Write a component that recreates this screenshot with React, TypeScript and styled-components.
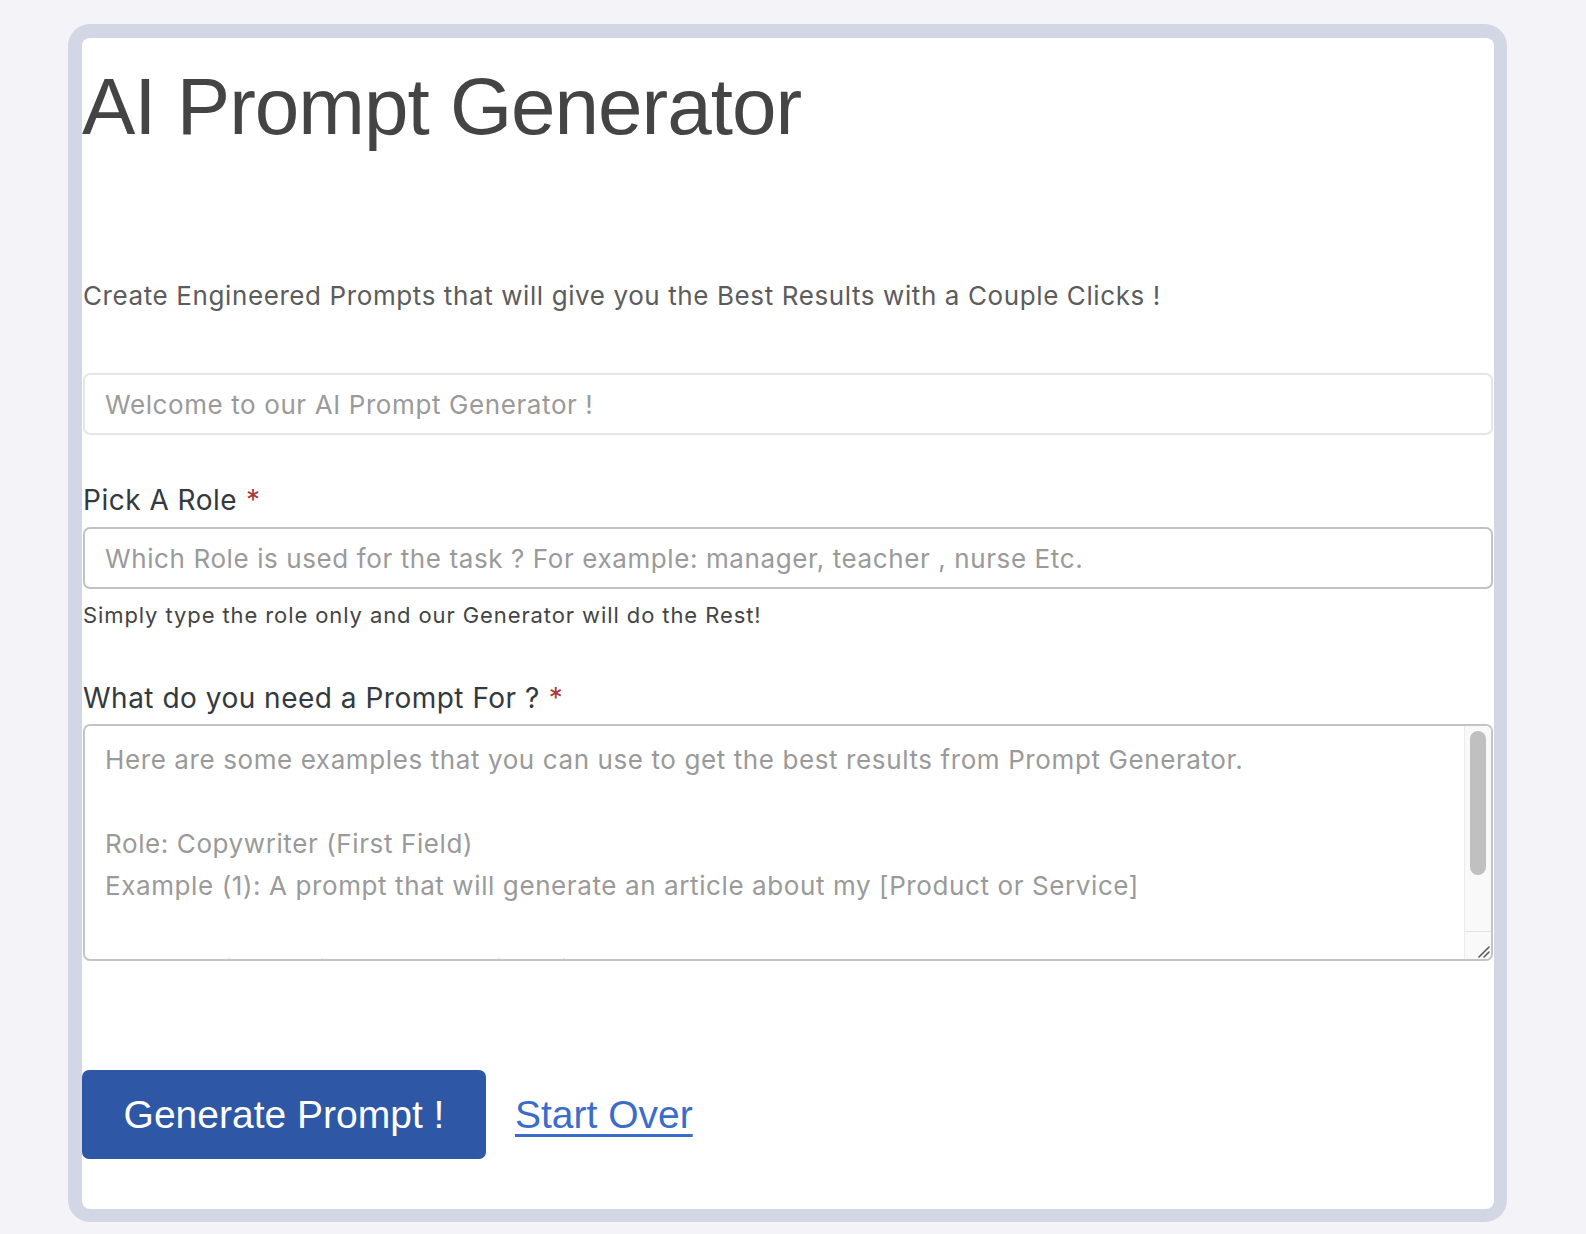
import React from "react"
import styled, { createGlobalStyle } from "styled-components"

const GlobalStyle = createGlobalStyle`
  html, body {
    margin: 0;
    padding: 0;
    background: #f3f3f8;
  }
  * {
    box-sizing: border-box;
  }
`

const Page = styled.div`
  padding: 24px 0 0 68px;
  min-height: 1234px;
  background: #f3f3f8;
`

const Frame = styled.div`
  width: 1439px;
  padding: 14px 13px 13px 14px;
  background: #d3d6e4;
  border-radius: 22px;
`

const Card = styled.div`
  background: #ffffff;
  border-radius: 8px;
  height: 1171px;
  display: flex;
  flex-direction: column;
  padding-top: 29px;
  font-family: "Inter", "Noto Sans", sans-serif;
`

const Title = styled.h1`
  margin: 0;
  font-family: "Liberation Sans", Arial, sans-serif;
  font-weight: 400;
  font-size: 80px;
  line-height: 1;
  letter-spacing: -1px;
  color: #444444;
`

const Intro = styled.p`
  margin: 131px 0 0 1px;
  font-size: 26px;
  line-height: 36px;
  letter-spacing: 0.6px;
  color: #5c5c5c;
`

const TextInput = styled.input<{ $strong?: boolean }>`
  display: block;
  width: 1410px;
  height: 62px;
  margin-left: 1px;
  padding: 0 20px;
  border: ${(p) => (p.$strong ? "2px solid #c2c2c2" : "2px solid #e6e6e6")};
  border-radius: 7px;
  background: #ffffff;
  font-family: "Inter", "Noto Sans", sans-serif;
  font-size: 26px;
  letter-spacing: 0.6px;
  color: #444;
  outline: none;
  &::placeholder {
    color: #9a9a9a;
  }
`

const Label = styled.label<{ $gap: number }>`
  display: block;
  margin: ${(p) => p.$gap}px 0 0 1px;
  font-size: 28px;
  line-height: 36px;
  letter-spacing: 0.5px;
  color: #33393e;
`

const Required = styled.span`
  color: #a93a3a;
  margin-left: 9px;
`

const FieldGap = styled.div<{ $h: number }>`
  height: ${(p) => p.$h}px;
  flex-shrink: 0;
`

const Help = styled.p`
  margin: 12px 0 0 1px;
  font-size: 22px;
  line-height: 28px;
  letter-spacing: 0.9px;
  color: #444444;
`

const AreaWrap = styled.div`
  position: relative;
  width: 1410px;
  height: 237px;
  margin-left: 1px;
`

const TextArea = styled.textarea`
  display: block;
  width: 100%;
  height: 100%;
  padding: 13px 48px 13px 20px;
  border: 2px solid #c4c4c4;
  border-radius: 7px;
  background: #ffffff;
  font-family: "Inter", "Noto Sans", sans-serif;
  font-size: 26px;
  line-height: 42px;
  letter-spacing: 0.6px;
  color: #9a9a9a;
  overflow: hidden;
  resize: none;
  outline: none;
`

const ScrollTrack = styled.div`
  position: absolute;
  top: 2px;
  right: 2px;
  bottom: 2px;
  width: 27px;
  background: #f9f9f9;
  border-left: 1px solid #ececec;
  border-radius: 0 5px 5px 0;
  display: flex;
  flex-direction: column;
  align-items: center;
  padding-top: 5px;
`

const ScrollThumb = styled.div`
  width: 16px;
  height: 144px;
  border-radius: 8px;
  background: #c0c0c0;
`

const Resizer = styled.div`
  margin-top: auto;
  width: 100%;
  height: 28px;
  border-top: 1px solid #e2e2e2;
  display: flex;
  align-items: flex-end;
  justify-content: flex-end;
  padding: 0 1px 1px 0;
`

const Actions = styled.div`
  display: flex;
  align-items: center;
  gap: 29px;
  margin-top: 109px;
`

const PrimaryButton = styled.button`
  width: 404px;
  height: 89px;
  border: none;
  border-radius: 7px;
  background: #2e58a5;
  color: #ffffff;
  font-family: "Liberation Sans", Arial, sans-serif;
  font-size: 39px;
  cursor: pointer;
`

const ResetLink = styled.a`
  font-family: "Liberation Sans", Arial, sans-serif;
  font-size: 39px;
  color: #3a6cc9;
  text-decoration: underline;
  text-underline-offset: 6px;
  text-decoration-thickness: 3px;
  cursor: pointer;
`

const examples = [
  "Here are some examples that you can use to get the best results from Prompt Generator.",
  "",
  "Role: Copywriter (First Field)",
  "Example (1): A prompt that will generate an article about my [Product or Service]",
  "",
  "Role: Social Media Manager (First Field)",
  "Example (2): A prompt that will generate a weekly content calendar for my brand",
].join("\n")

const App = function () {
  return (
    <>
      <GlobalStyle />
      <Page>
        <Frame>
          <Card>
            <Title>AI Prompt Generator</Title>
            <Intro>
              Create Engineered Prompts that will give you the Best Results with a Couple Clicks !
            </Intro>
            <FieldGap $h={59} />
            <TextInput placeholder="Welcome to our AI Prompt Generator !" />
            <Label $gap={47}>
              Pick A Role<Required>*</Required>
            </Label>
            <FieldGap $h={9} />
            <TextInput
              $strong
              placeholder="Which Role is used for the task ? For example: manager, teacher , nurse Etc."
            />
            <Help>Simply type the role only and our Generator will do the Rest!</Help>
            <Label $gap={51}>
              What do you need a Prompt For ?<Required>*</Required>
            </Label>
            <FieldGap $h={8} />
            <AreaWrap>
              <TextArea defaultValue={examples} />
              <ScrollTrack>
                <ScrollThumb />
                <Resizer>
                  <svg width="14" height="14" viewBox="0 0 14 14">
                    <path d="M13 3 L3 13 M13 8 L8 13" stroke="#5a5a5a" strokeWidth="1.6" strokeLinecap="round" />
                  </svg>
                </Resizer>
              </ScrollTrack>
            </AreaWrap>
            <Actions>
              <PrimaryButton>Generate Prompt !</PrimaryButton>
              <ResetLink>Start Over</ResetLink>
            </Actions>
          </Card>
        </Frame>
      </Page>
    </>
  )
}

export default App
